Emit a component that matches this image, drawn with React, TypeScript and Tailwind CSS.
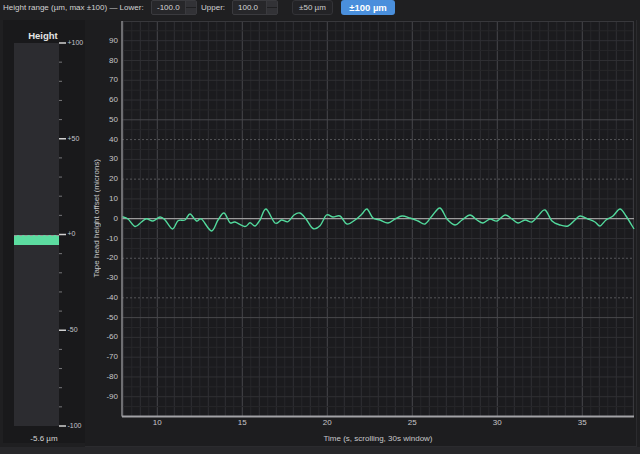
import React from 'react';

// plot mapping (page pixels)
const PX = (t: number) => 123.3 + (t - 8) * 17;
const PY = (v: number) => 218.7 - v * 1.978;

const PLOT = { x: 122, y: 21, w: 512, h: 395.5 };

// height trace, page pixel coordinates
const trace: [number, number][] = [
    [122, 216.7], [128, 219], [135, 226.5], [141.5, 222], [146.5, 218.7], [153, 221], [160, 217],
    [165, 220], [172.5, 229], [178, 220.7], [185, 220], [190, 214], [196.5, 221], [201.5, 219],
    [211.5, 231], [218, 220], [224, 213], [230, 222.7], [235, 222], [245, 226.5], [250, 222.7],
    [255, 226], [260, 220], [266, 209], [275, 223], [281.5, 220], [288, 221.7], [294, 215],
    [300, 213], [306, 219], [313, 228.5], [320, 225.7], [326.5, 215], [333, 217], [340, 216],
    [347, 224], [355, 220], [362, 214], [367, 209], [373, 218], [380, 220], [388, 223],
    [395, 219], [402, 216], [410, 218], [418, 221], [425, 224], [432, 216], [440, 208],
    [447, 219], [455, 225], [462, 220], [470, 215], [477, 220], [483, 223], [490, 219],
    [497, 221], [505, 215], [512, 219], [518, 223], [525, 220], [532, 222], [538, 216],
    [545, 210], [552, 221], [560, 225], [568, 226], [575, 220], [580, 216], [588, 219],
    [595, 222], [600, 226], [606, 220], [613, 216], [620, 209], [626, 216], [634, 229],
];

function smoothPath(pts: [number, number][]) {
    let d = `M${pts[0][0]},${pts[0][1]}`;
    for (let i = 0; i < pts.length - 1; i++) {
        const p0 = pts[i - 1] || pts[i];
        const p1 = pts[i];
        const p2 = pts[i + 1];
        const p3 = pts[i + 2] || p2;
        const c1x = p1[0] + (p2[0] - p0[0]) / 6;
        const c1y = p1[1] + (p2[1] - p0[1]) / 6;
        const c2x = p2[0] - (p3[0] - p1[0]) / 6;
        const c2y = p2[1] - (p3[1] - p1[1]) / 6;
        d += ` C${c1x.toFixed(2)},${c1y.toFixed(2)} ${c2x.toFixed(2)},${c2y.toFixed(2)} ${p2[0]},${p2[1]}`;
    }
    return d;
}

const SpinBox = ({ value }: { value: string }) => (
    <div className="flex h-[15px] w-[46px] rounded-[2px] border border-[#3a3a3e] bg-[#27272a]">
        <span className="flex-1 pl-[5px] text-[8px] leading-[13px] text-[#d6d6d6]">{value}</span>
        <div className="flex w-[11px] flex-col border-l border-[#3a3a3e]">
            <div className="flex-1 border-b border-[#1f1f21] bg-[#323236]" />
            <div className="flex-1 bg-[#323236]" />
        </div>
    </div>
);

const HeightGauge = ({ value }: { value: number }) => {
    const H = 383;
    const yOf = (v: number) => ((100 - v) / 200) * H;
    const ticks = Array.from({ length: 21 }, (_, i) => 100 - i * 10);
    const top = yOf(Math.max(value, 0));
    const height = Math.abs(value) * (H / 200);

    return (
        <div className="ml-[3px] flex h-[423px] w-[82px] flex-col bg-[#19191b]">
            {/* Title */}
            <div className="flex h-[23px] items-center justify-center pt-[9px] pr-[2px] text-[9.5px] font-bold leading-[12px] text-[#e4e4e4]">
                Height
            </div>

            {/* Bar + scale */}
            <div className="flex h-[383px]">
                <div className="relative ml-[11px] h-full w-[45px] bg-[#2c2c30]">
                    <div
                        className="absolute left-0 right-0 border-t border-dashed border-[#9a9a9a] bg-[#5cdca0]"
                        style={{ top, height }}
                    />
                </div>
                <svg width={26} height={H} className="overflow-visible">
                    {ticks.map((v) => {
                        const y = yOf(v);
                        const major = v % 50 === 0;
                        return (
                            <g key={v}>
                                <line
                                    x1={0}
                                    x2={major ? 7 : 3}
                                    y1={y}
                                    y2={y}
                                    stroke={major ? '#d0d0d0' : '#77777a'}
                                    strokeWidth={major ? 1.5 : 1}
                                />
                                {major && (
                                    <text
                                        x={8.5}
                                        y={y}
                                        dominantBaseline="middle"
                                        fontSize={7}
                                        fill="#c4c6cc"
                                        fontFamily="Liberation Sans, Arial, sans-serif"
                                    >
                                        {v > 0 ? `+${v}` : v === 0 ? '+0' : `${v}`}
                                    </text>
                                )}
                            </g>
                        );
                    })}
                </svg>
            </div>

            {/* Readout */}
            <div className="flex flex-1 items-end justify-center pb-[0.5px] text-[8px] leading-[9px] text-[#d6d6d6]">
                {value.toFixed(1)} µm
            </div>
        </div>
    );
};

const TimeChart = () => {
    const vLines = Array.from({ length: 61 }, (_, i) => 8 + i * 0.5);
    const hLines = Array.from({ length: 41 }, (_, i) => -100 + i * 5);
    const yLabels = Array.from({ length: 19 }, (_, i) => 90 - i * 10);
    const xLabels = [10, 15, 20, 25, 30, 35];

    return (
        <svg width={534} height={410} viewBox="102 20 534 410" className="block">
            <rect x={PLOT.x} y={PLOT.y} width={PLOT.w} height={PLOT.h} fill="#1b1b1e" />

            {/* vertical grid */}
            {vLines.map((t) => {
                const major = t % 5 === 0;
                const medium = Number.isInteger(t);
                return (
                    <line
                        key={`v${t}`}
                        x1={PX(t)}
                        x2={PX(t)}
                        y1={PLOT.y}
                        y2={PLOT.y + PLOT.h}
                        stroke={major ? '#46464a' : medium ? '#303034' : '#27272a'}
                        strokeWidth={1}
                    />
                );
            })}

            {/* horizontal grid */}
            {hLines.map((v) => {
                if (v === 0 || Math.abs(v) === 100) return null;
                const major = v % 50 === 0;
                const dotted = Math.abs(v) === 20 || Math.abs(v) === 40;
                const medium = v % 10 === 0;
                return (
                    <line
                        key={`h${v}`}
                        x1={PLOT.x}
                        x2={PLOT.x + PLOT.w}
                        y1={PY(v)}
                        y2={PY(v)}
                        stroke={major ? '#48484c' : dotted ? '#56565a' : medium ? '#303034' : '#27272a'}
                        strokeDasharray={dotted ? '2 2' : undefined}
                        strokeWidth={1}
                    />
                );
            })}

            {/* plot frame */}
            <line x1={PLOT.x} x2={PLOT.x + PLOT.w} y1={PLOT.y + 0.5} y2={PLOT.y + 0.5} stroke="#38383c" />
            <line x1={PLOT.x + PLOT.w - 0.5} x2={PLOT.x + PLOT.w - 0.5} y1={PLOT.y} y2={PLOT.y + PLOT.h} stroke="#38383c" />

            {/* zero line */}
            <line x1={PLOT.x} x2={PLOT.x + PLOT.w} y1={PY(0)} y2={PY(0)} stroke="#9c9c9c" strokeWidth={1.3} />

            {/* trace */}
            <path d={smoothPath(trace)} fill="none" stroke="#52d99c" strokeWidth={1.4} strokeLinejoin="round" />

            {/* axes */}
            <line x1={PLOT.x} x2={PLOT.x} y1={PLOT.y} y2={PLOT.y + PLOT.h} stroke="#8a8a8e" strokeWidth={1.5} />
            <line x1={PLOT.x} x2={PLOT.x + PLOT.w} y1={PLOT.y + PLOT.h} y2={PLOT.y + PLOT.h} stroke="#a2a2a6" strokeWidth={2} />

            {/* y tick labels */}
            {yLabels.map((v) => (
                <text
                    key={`yl${v}`}
                    x={118}
                    y={PY(v)}
                    textAnchor="end"
                    dominantBaseline="middle"
                    fontSize={8}
                    fill="#c6c6c8"
                    fontFamily="Liberation Sans, Arial, sans-serif"
                >
                    {v}
                </text>
            ))}

            {/* x tick labels */}
            {xLabels.map((t) => (
                <text
                    key={`xl${t}`}
                    x={PX(t)}
                    y={422.7}
                    textAnchor="middle"
                    dominantBaseline="middle"
                    fontSize={8}
                    fill="#c6c6c8"
                    fontFamily="Liberation Sans, Arial, sans-serif"
                >
                    {t}
                </text>
            ))}
        </svg>
    );
};

export default function App() {
    return (
        <div className="flex h-[454px] w-[640px] flex-col overflow-hidden bg-[#1f1f21] font-['Liberation_Sans',Arial,sans-serif] text-[#d4d4d4]">
            {/* Range controls */}
            <div className="flex h-[20px] items-start pl-[3px]">
                <span className="w-[148px] text-[8px] leading-[15px] text-[#d2d2d2]">
                    Height range (µm, max ±100) — Lower:
                </span>
                <SpinBox value="-100.0" />
                <span className="ml-[4px] w-[31px] text-[8px] leading-[15px] text-[#d2d2d2]">Upper:</span>
                <SpinBox value="100.0" />
                <button className="ml-[14px] h-[15px] w-[41px] rounded-[3px] border border-[#333337] bg-[#232326] text-[8px] leading-[13px] text-[#cfcfcf]">
                    ±50 µm
                </button>
                <button className="ml-[8px] h-[15px] w-[54px] rounded-[3px] bg-[#4a8fdc] text-[9.5px] font-bold leading-[15px] text-white">
                    ±100 µm
                </button>
            </div>

            {/* Main area */}
            <div className="flex flex-1">
                <HeightGauge value={-5.6} />

                <div className="flex h-[427px] w-[552px] flex-col border-r border-b border-[#2b2b2e] bg-[#1d1d1f]">
                    <div className="flex h-[410px]">
                        <div className="flex w-[17px] items-center justify-center pb-[13px] pl-[5px]">
                            <span className="rotate-180 whitespace-nowrap text-[8px] leading-[9px] text-[#c8c8ca] [writing-mode:vertical-rl]">
                                Tape head height offset (microns)
                            </span>
                        </div>
                        <TimeChart />
                    </div>
                    <div className="flex flex-1 items-center justify-center pl-[37px] pr-[2px] text-[8px] leading-[9px] text-[#c8c8ca]">
                        Time (s, scrolling, 30s window)
                    </div>
                </div>
            </div>

            {/* Status strip */}
            <div className="h-[7px] bg-[#27272a]" />
        </div>
    );
}
